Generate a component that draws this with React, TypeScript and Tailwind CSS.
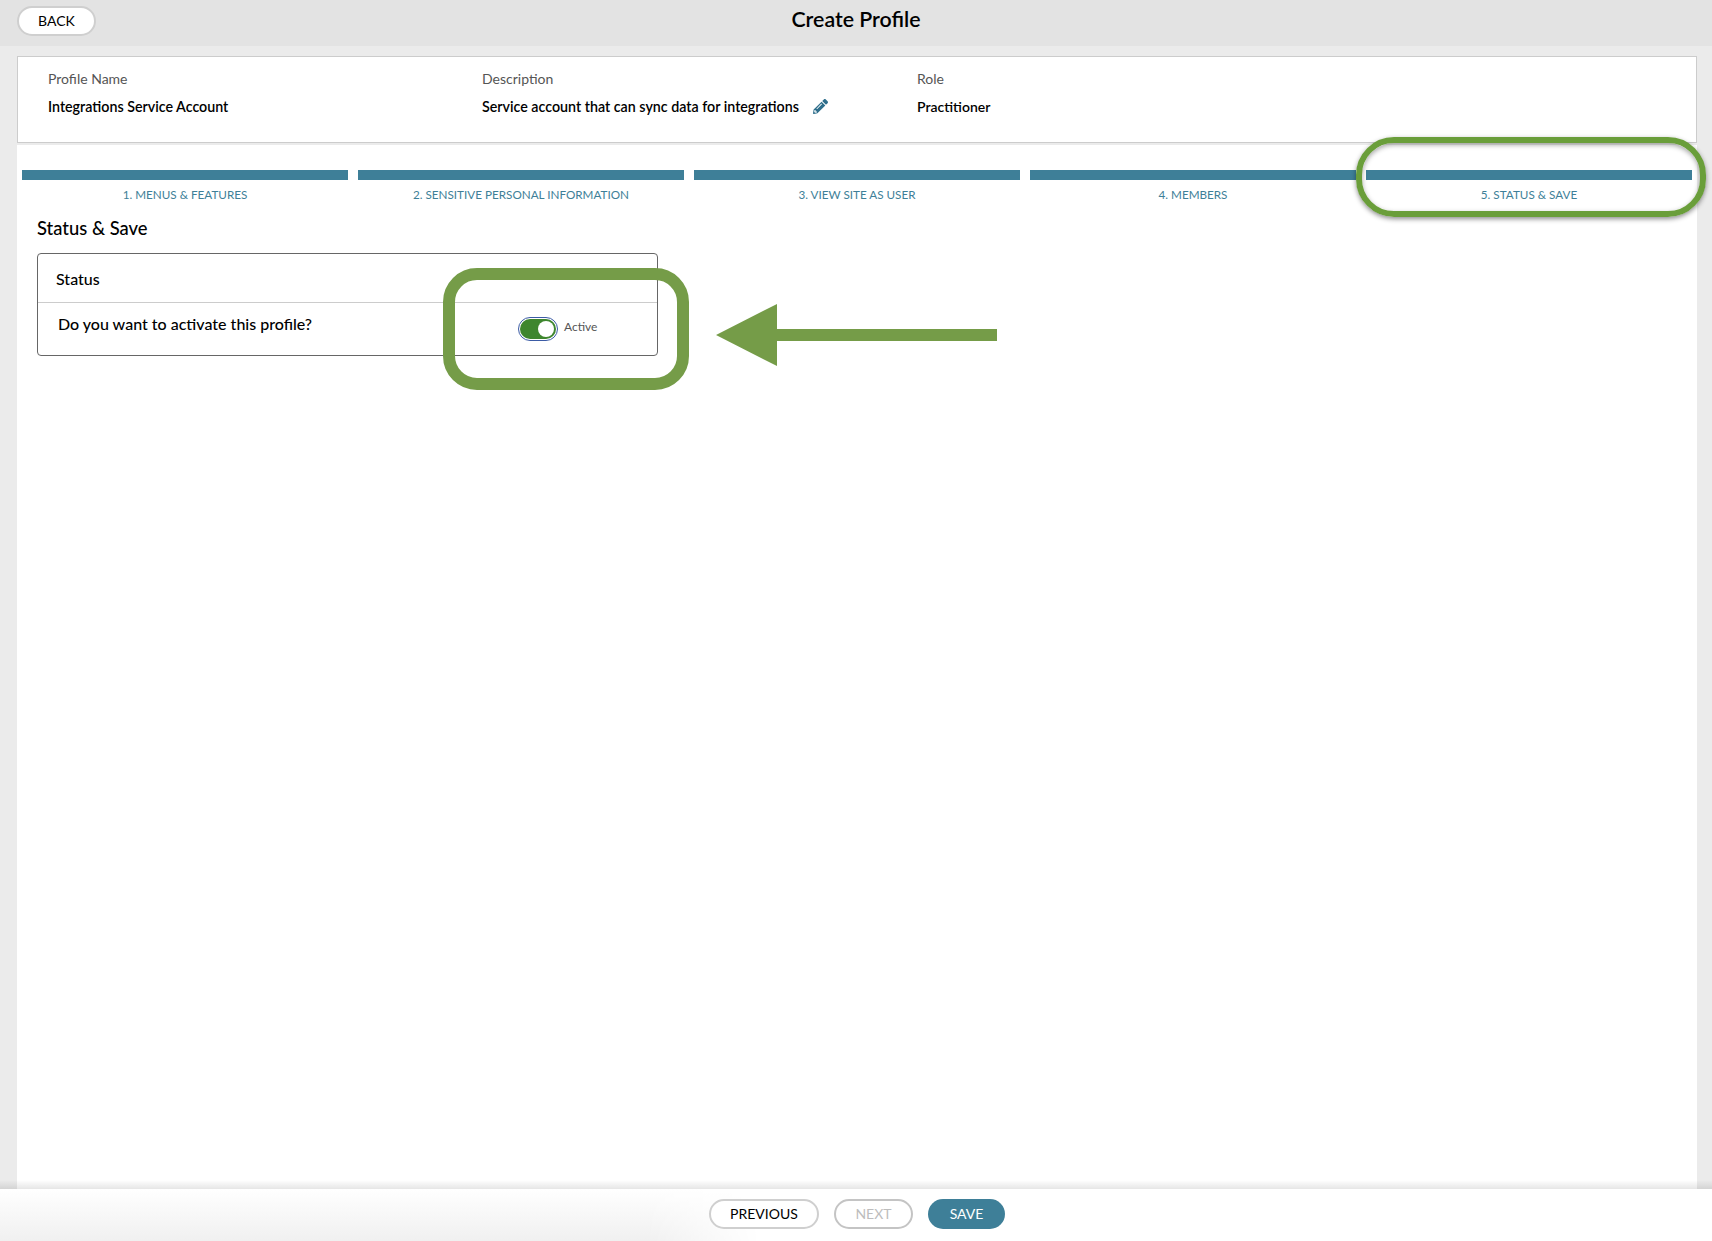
import { FaPencilAlt } from "react-icons/fa";

const steps = [
  "1. Menus & Features",
  "2. Sensitive Personal Information",
  "3. View Site as User",
  "4. Members",
  "5. Status & Save",
];

function Arrow() {
  return (
    <svg className="absolute left-[716px] top-[304px]" width="282" height="62" viewBox="0 0 282 62">
      <polygon points="0,31 61,0 61,25 281,25 281,37 61,37 61,62" fill="#759c48" />
    </svg>
  );
}

export default function App() {
  return (
    <div className="relative h-[1241px] w-[1712px] overflow-hidden flex flex-col bg-[#ebebeb] font-['Lato','Liberation_Sans',sans-serif] text-black">
      <header className="relative h-[46px] shrink-0 bg-[#e3e3e3] flex items-center justify-center">
        <button className="absolute left-[17px] top-[6px] h-[30px] w-[79px] rounded-full bg-white border-2 border-[#cfcfcf] text-[14px] leading-none text-black">
          BACK
        </button>
        <h1 className="text-[21.3px] leading-none font-semibold -mt-[7px]">Create Profile</h1>
      </header>

      <main className="flex-1 min-h-0 flex flex-col pl-[17px] pr-[15px] pt-[10px]">
        <section className="h-[87px] shrink-0 bg-white border border-[#cccccc] pl-[30px] pt-[13px] flex">
          <div className="w-[434px]">
            <div className="text-[14px] leading-[17px] text-[#555555]">Profile Name</div>
            <div className="mt-[11px] text-[14.25px] leading-[17px] font-semibold">Integrations Service Account</div>
          </div>
          <div className="w-[435px]">
            <div className="text-[14px] leading-[17px] text-[#555555]">Description</div>
            <div className="mt-[11px] text-[14.25px] leading-[17px] font-semibold flex items-center">
              <span>Service account that can sync data for integrations</span>
              <FaPencilAlt className="ml-[14px] text-[15px] text-[#2f6f8c]" />
            </div>
          </div>
          <div>
            <div className="text-[14px] leading-[17px] text-[#555555]">Role</div>
            <div className="mt-[11px] text-[14px] leading-[17px] font-semibold">Practitioner</div>
          </div>
        </section>

        <section className="flex-1 min-h-0 mt-[2px] bg-white">
          <div className="grid grid-cols-5 gap-x-[10px] px-[5px] pt-[25px]">
            {steps.map((s) => (
              <div key={s} className="flex flex-col items-center">
                <div className="h-[10px] w-full bg-[#3e7f98]" />
                <div className="mt-[7px] text-[11.7px] leading-[15px] uppercase text-[#3e7f98]">{s}</div>
              </div>
            ))}
          </div>

          <h2 className="ml-[20px] mt-[15px] text-[18.4px] leading-[22px] font-medium">Status &amp; Save</h2>

          <div className="ml-[20px] mt-[14px] w-[621px] h-[103px] border border-[#666666] rounded-[4px]">
            <div className="h-[49px] border-b border-[#cccccc] pl-[18px] pt-[16px] text-[16px] leading-[18px] font-medium">
              Status
            </div>
            <div className="relative flex pl-[20px] pt-[11px]">
              <div className="text-[16px] leading-[20px] font-medium">Do you want to activate this profile?</div>
              <div className="absolute left-[480px] top-[14px] flex items-center">
                <div className="h-[24px] w-[40px] rounded-full border border-[#3b5ba5] p-[1px]">
                  <div className="h-full w-full rounded-full bg-[#3e862e] flex items-center justify-end pr-[2px]">
                    <div className="h-[16px] w-[16px] rounded-full bg-white" />
                  </div>
                </div>
                <span className="ml-[6px] -mt-[4px] text-[12px] leading-none text-[#555555]">Active</span>
              </div>
            </div>
          </div>
        </section>
      </main>

      <footer className="relative h-[52px] shrink-0 bg-white flex items-center justify-center gap-[15px] pl-[2px] pb-[2px]">
        <div className="absolute left-0 right-0 bottom-full h-[9px] bg-gradient-to-b from-black/0 to-black/10" />
        <div className="absolute left-0 top-0 h-full w-[760px] bg-gradient-to-t from-[#f0f0f0] to-white [mask-image:linear-gradient(to_right,black_85%,transparent)]" />
        <button className="relative h-[30px] w-[110px] rounded-full bg-white border-2 border-[#cfcfcf] text-[14px] leading-none">PREVIOUS</button>
        <button className="relative h-[30px] w-[79px] rounded-full bg-white border-2 border-[#c4c4c4] text-[14px] leading-none text-[#bdbdbd]">NEXT</button>
        <button className="relative h-[30px] w-[77px] rounded-full bg-[#3e7f98] text-[14px] leading-none text-white">SAVE</button>
      </footer>

      <div className="absolute left-[1356px] top-[137px] h-[80px] w-[350px] rounded-[38px] border-[6px] border-[#6a9e3a] shadow-[0_2px_5px_rgba(0,0,0,0.45),inset_0_2px_5px_rgba(0,0,0,0.35)]" />
      <div className="absolute left-[443px] top-[268px] h-[122px] w-[246px] rounded-[34px] border-[12px] border-[#759c48]" />
      <Arrow />
    </div>
  );
}
